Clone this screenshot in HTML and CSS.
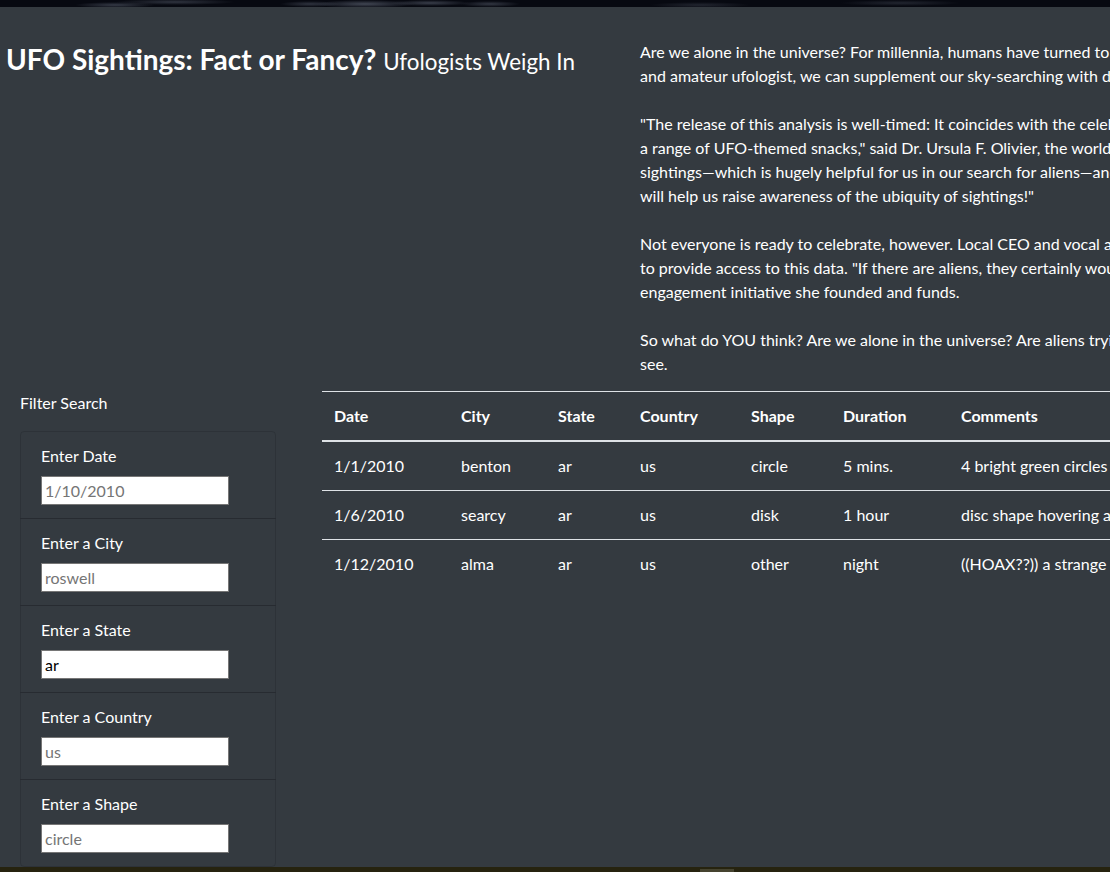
FILE: index.html
```html
<!DOCTYPE html>
<html lang="en">
<head>
<meta charset="utf-8">
<title>UFO Sightings: Fact or Fancy?</title>
<link rel="stylesheet" href="styles.css">
</head>
<body>
<div class="page">
  <div class="hero-strip"></div>

  <section class="intro">
    <h1 class="title">UFO Sightings: Fact or Fancy? <small>Ufologists Weigh In</small></h1>
    <article class="story">
      <p>Are we alone in the universe? For millennia, humans have turned to the skies in search of an answer. Now, thanks to one data analyst<br>and amateur ufologist, we can supplement our sky-searching with data-driven analysis of UFO sightings across the country.</p>
      <p>"The release of this analysis is well-timed: It coincides with the celebration of World UFO Day, when ufologists gather to share stories and<br>a range of UFO-themed snacks," said Dr. Ursula F. Olivier, the world's foremost expert on UFOs. "This dataset makes it easy to explore<br>sightings—which is hugely helpful for us in our search for aliens—and it's accessible to everyone. We're confident this new resource<br>will help us raise awareness of the ubiquity of sightings!"</p>
      <p>Not everyone is ready to celebrate, however. Local CEO and vocal alien skeptic Kelly Ashton criticized the decision<br>to provide access to this data. "If there are aliens, they certainly would not want to be found," said Ashton, who runs a civic<br>engagement initiative she founded and funds.</p>
      <p>So what do YOU think? Are we alone in the universe? Are aliens trying to contact us? Explore the data for yourself and<br>see.</p>
    </article>
  </section>

  <section class="content">
    <aside class="filters">
      <p class="filters-title">Filter Search</p>
      <ul class="filter-list">
        <li class="filter-item">
          <label for="datetime">Enter Date</label>
          <input class="filter-input" id="datetime" type="text" placeholder="1/10/2010">
        </li>
        <li class="filter-item">
          <label for="city">Enter a City</label>
          <input class="filter-input" id="city" type="text" placeholder="roswell">
        </li>
        <li class="filter-item">
          <label for="state">Enter a State</label>
          <input class="filter-input" id="state" type="text" placeholder="ca" value="ar">
        </li>
        <li class="filter-item">
          <label for="country">Enter a Country</label>
          <input class="filter-input" id="country" type="text" placeholder="us">
        </li>
        <li class="filter-item">
          <label for="shape">Enter a Shape</label>
          <input class="filter-input" id="shape" type="text" placeholder="circle">
        </li>
      </ul>
    </aside>

    <div class="table-wrap">
      <table class="sightings">
        <colgroup>
          <col class="c-date">
          <col class="c-city">
          <col class="c-state">
          <col class="c-country">
          <col class="c-shape">
          <col class="c-duration">
          <col class="c-comments">
        </colgroup>
        <thead>
          <tr>
            <th>Date</th>
            <th>City</th>
            <th>State</th>
            <th>Country</th>
            <th>Shape</th>
            <th>Duration</th>
            <th>Comments</th>
          </tr>
        </thead>
        <tbody>
          <tr>
            <td>1/1/2010</td>
            <td>benton</td>
            <td>ar</td>
            <td>us</td>
            <td>circle</td>
            <td>5 mins.</td>
            <td>4 bright green circles high in the sky going in circles</td>
          </tr>
          <tr>
            <td>1/6/2010</td>
            <td>searcy</td>
            <td>ar</td>
            <td>us</td>
            <td>disk</td>
            <td>1 hour</td>
            <td>disc shape hovering above the trees</td>
          </tr>
          <tr>
            <td>1/12/2010</td>
            <td>alma</td>
            <td>ar</td>
            <td>us</td>
            <td>other</td>
            <td>night</td>
            <td>((HOAX??)) a strange light in the sky</td>
          </tr>
        </tbody>
      </table>
    </div>
  </section>

  <footer class="footer"></footer>
</div>
</body>
</html>
```

FILE: styles.css
```css
*, *::before, *::after {
  box-sizing: border-box;
}

html, body {
  margin: 0;
  padding: 0;
  overflow: hidden;
  background: #343a40;
}

body {
  font-family: Lato, "Open Sans", sans-serif;
  font-size: 16px;
  line-height: 1.5;
  color: #fff;
}

.page {
  width: 1500px;
}

.hero-strip {
  height: 7px;
  background:
    radial-gradient(ellipse 40px 3px at 115px 5px, rgba(140,150,170,.35), transparent),
    radial-gradient(ellipse 60px 3px at 175px 2px, rgba(140,150,170,.3), transparent),
    radial-gradient(ellipse 30px 3px at 310px 4px, rgba(140,150,170,.3), transparent),
    radial-gradient(ellipse 50px 4px at 365px 4px, rgba(150,160,180,.4), transparent),
    radial-gradient(ellipse 40px 3px at 430px 3px, rgba(150,160,180,.35), transparent),
    radial-gradient(ellipse 30px 3px at 490px 4px, rgba(150,160,180,.3), transparent),
    radial-gradient(ellipse 50px 3px at 700px 5px, rgba(140,150,170,.2), transparent),
    radial-gradient(ellipse 60px 3px at 900px 3px, rgba(140,150,170,.2), transparent),
    #070911;
}

/* ---------- intro ---------- */
.intro {
  display: flex;
  align-items: flex-start;
  padding-top: 33px;
}

.title {
  flex: 0 0 640px;
  margin: 3px 0 0;
  padding-left: 6px;
  font-size: 28px;
  line-height: 1.2;
  font-weight: 700;
}

.title small {
  font-size: 80%;
  font-weight: 400;
}

.story {
  flex: 1 1 auto;
}

.story p {
  margin: 0 0 24px;
  white-space: nowrap;
}

.story p:last-child {
  margin-bottom: 15px;
}

/* ---------- content ---------- */
.content {
  display: flex;
  align-items: flex-start;
}

.filters {
  flex: 0 0 322px;
  padding-left: 20px;
  padding-right: 46px;
}

.filters-title {
  margin: 0 0 16px;
}

.filter-list {
  margin: 0;
  padding: 0;
  list-style: none;
  border-radius: 4px;
}

.filter-item {
  display: flex;
  flex-direction: column;
  align-items: flex-start;
  padding: 12px 20px 13px;
  margin-bottom: -1px;
  border: 1px solid rgba(0, 0, 0, 0.125);
}

.filter-item:first-child {
  border-radius: 4px 4px 0 0;
}

.filter-item:last-child {
  margin-bottom: 0;
  border-radius: 0 0 4px 4px;
}

.filter-item label {
  margin-bottom: 8px;
}

.filter-input {
  width: 188px;
  height: 29px;
  padding: 1px 3px;
  border: 1px solid #767676;
  border-radius: 0;
  background: #fff;
  color: #000;
  font: inherit;
  line-height: normal;
}

.filter-input::placeholder {
  color: #757575;
  opacity: 1;
}

/* ---------- table ---------- */
.table-wrap {
  flex: 0 0 auto;
}

.sightings {
  width: 1150px;
  border-collapse: collapse;
  table-layout: fixed;
  color: #fff;
}

.c-date { width: 127px; }
.c-city { width: 97px; }
.c-state { width: 82px; }
.c-country { width: 111px; }
.c-shape { width: 92px; }
.c-duration { width: 118px; }

.sightings th,
.sightings td {
  padding: 12px;
  text-align: left;
  vertical-align: top;
  border-top: 1px solid #dee2e6;
  white-space: nowrap;
}

.sightings th {
  font-weight: 700;
}

.sightings thead th {
  border-bottom: 2px solid #dee2e6;
}

/* ---------- footer ---------- */
.footer {
  height: 40px;
  background:
    linear-gradient(#45432f, #45432f) 700px 2px / 34px 10px no-repeat,
    #26230f;
}
```
